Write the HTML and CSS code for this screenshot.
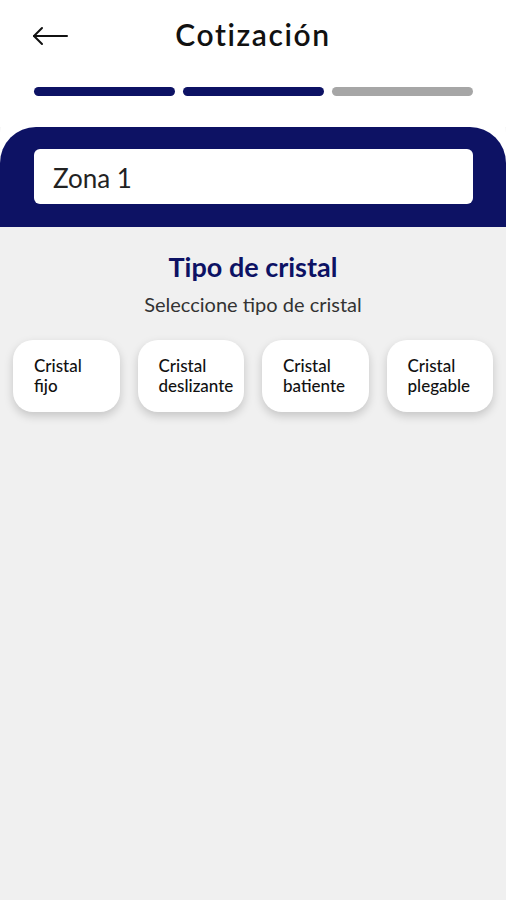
FILE: index.html
```html
<!DOCTYPE html>
<html lang="es">
<head>
  <meta charset="UTF-8" />
  <meta name="viewport" content="width=device-width, initial-scale=1.0" />
  <title>Cotización</title>
  <link rel="stylesheet" href="styles.css">
</head>
<body>
  <header class="topbar">
    <button class="back-btn" type="button" aria-label="Volver">
      <svg width="36" height="20" viewBox="0 0 36 20" fill="none" stroke="#111" stroke-width="2" stroke-linecap="round" stroke-linejoin="round">
        <path d="M35 10H2" />
        <path d="M10 2L2 10l8 8" />
      </svg>
    </button>
    <h1 class="title">Cotización</h1>
  </header>

  <div class="steps">
    <span class="step done"></span>
    <span class="step done"></span>
    <span class="step"></span>
  </div>

  <section class="zone-panel">
    <input class="zone-input" type="text" value="Zona 1" aria-label="Nombre de zona" />
  </section>

  <main class="content">
    <h2 class="section-title">Tipo de cristal</h2>
    <p class="section-sub">Seleccione tipo de cristal</p>

    <div class="glass-grid">
      <button class="glass-card" type="button">Cristal<br>fijo</button>
      <button class="glass-card" type="button">Cristal<br>deslizante</button>
      <button class="glass-card" type="button">Cristal<br>batiente</button>
      <button class="glass-card" type="button">Cristal<br>plegable</button>
    </div>
  </main>
</body>
</html>
```

FILE: styles.css
```css
html, body {
  height: 100%;
}
body {
  margin: 0;
  font-family: Lato, "Open Sans", sans-serif;
  background: #f0f0f0;
  color: #111;
  display: flex;
  flex-direction: column;
}
.topbar {
  position: relative;
  background: #fff;
  height: 72px;
  display: flex;
  align-items: center;
  justify-content: center;
}
.back-btn {
  position: absolute;
  left: 32px;
  top: 26px;
  padding: 0;
  border: none;
  background: none;
  cursor: pointer;
  display: flex;
}
.title {
  margin: 0 0 4px;
  font-size: 30px;
  font-weight: 600;
  letter-spacing: 1.6px;
  color: #111;
}
.steps {
  background: #fff;
  display: flex;
  gap: 8px;
  padding: 15px 33px 31px 34px;
}
.step {
  flex: 1;
  height: 9px;
  border-radius: 5px;
  background: #a6a6a6;
}
.step.done {
  background: #0d1264;
}
.zone-panel {
  background: #0d1264;
  border-radius: 36px 36px 0 0;
  padding: 22px 33px 23px 34px;
  box-shadow: 0 -30px 0 #fff;
}
.zone-input {
  display: block;
  width: 100%;
  box-sizing: border-box;
  height: 55px;
  border: none;
  border-radius: 6px;
  background: #fff;
  padding: 2px 19px 0;
  font-family: Lato, sans-serif;
  font-size: 26px;
  color: #222;
  outline: none;
}
.content {
  flex: 1;
  text-align: center;
  padding-top: 23px;
}
.section-title {
  margin: 0;
  font-size: 27px;
  font-weight: 700;
  color: #0d1264;
}
.section-sub {
  margin: 9px 0 0;
  font-size: 20px;
  color: #333;
}
.glass-grid {
  display: grid;
  grid-template-columns: repeat(4, 1fr);
  gap: 18px;
  padding: 0 13px;
  margin-top: 24px;
}
.glass-card {
  height: 72px;
  border: none;
  border-radius: 20px;
  background: #fff;
  box-shadow: 0 4px 10px rgba(0, 0, 0, 0.18);
  padding: 0 6px 0 21px;
  text-align: left;
  font-family: Lato, sans-serif;
  font-size: 17px;
  font-weight: 500;
  line-height: 20px;
  color: #111;
  cursor: pointer;
}
```
